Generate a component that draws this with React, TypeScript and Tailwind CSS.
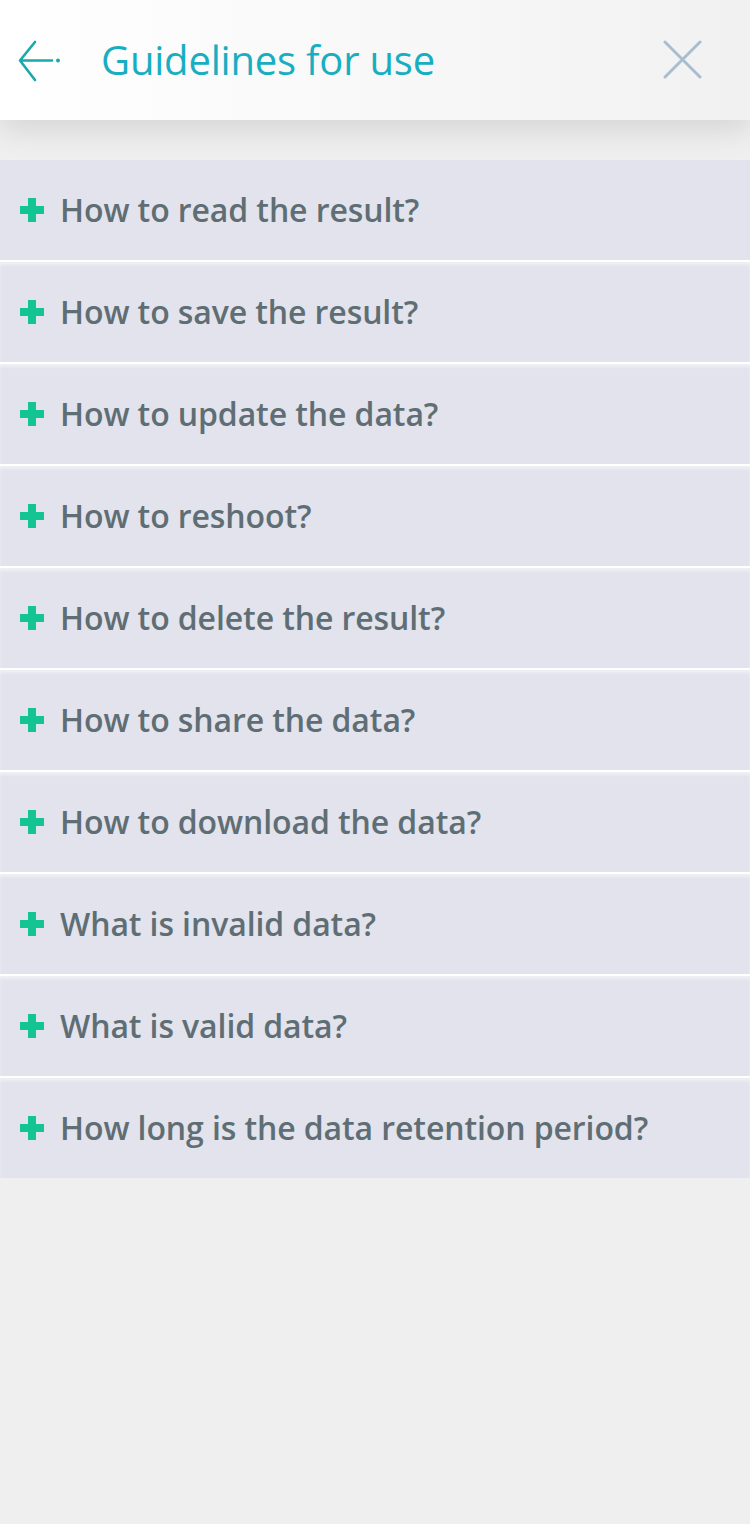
const questions = [
  "How to read the result?",
  "How to save the result?",
  "How to update the data?",
  "How to reshoot?",
  "How to delete the result?",
  "How to share the data?",
  "How to download the data?",
  "What is invalid data?",
  "What is valid data?",
  "How long is the data retention period?",
];

const PlusIcon = () => (
  <svg width="24" height="24" viewBox="0 0 24 24" className="shrink-0">
    <path d="M8 0h8v8h8v8h-8v8H8v-8H0V8h8z" fill="#12c592" />
  </svg>
);

export default function App() {
  return (
    <div className="min-h-[1524px] w-[750px] bg-[#efefef] font-['Open_Sans',sans-serif]">
      <header className="relative z-10 flex h-[120px] items-center bg-gradient-to-r from-white to-[#f1f1f1] shadow-[0_8px_30px_rgba(0,0,0,0.12)]">
        <button className="ml-[18px] flex h-[44px] w-[44px] items-center">
          <svg width="44" height="44" viewBox="18 37 44 44">
            <path d="M35 41 L20 59.5 L35 79 M20 59.5 H52" fill="none" stroke="#19a9ac" strokeWidth="2.6" strokeLinecap="round" strokeLinejoin="round" />
            <circle cx="58" cy="59.5" r="2" fill="#19a9ac" />
          </svg>
        </button>
        <h1 className="ml-[39px] text-[40px] font-normal leading-none tracking-[-0.2px] text-[#18aec2]">Guidelines for use</h1>
        <button className="ml-auto mr-[47px] flex h-[40px] w-[40px] items-center justify-center">
          <svg width="40" height="40" viewBox="0 0 40 40">
            <path d="M2 2 L37 37 M37 2 L2 37" stroke="#a9bdd1" strokeWidth="3" strokeLinecap="round" />
          </svg>
        </button>
      </header>

      <ul className="mt-[40px]">
        {questions.map((q, i) => (
          <li
            key={q}
            className={`flex items-center gap-[16px] bg-[#e2e3ec] pl-[20px] ${i > 0 ? "h-[102px] border-t-2 border-white shadow-[inset_0_3px_3px_rgba(255,255,255,0.45)]" : "h-[100px]"}`}
          >
            <PlusIcon />
            <span className="text-[32px] font-semibold tracking-[-0.1px] text-[#5f6e74]">{q}</span>
          </li>
        ))}
      </ul>
    </div>
  );
}
